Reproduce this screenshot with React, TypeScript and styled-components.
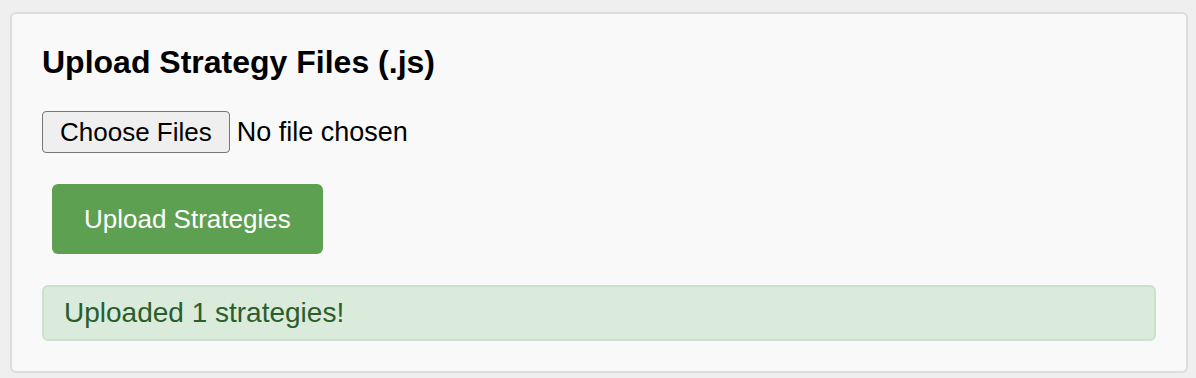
import React, { useState } from 'react';
import styled, { createGlobalStyle } from 'styled-components';

const GlobalStyle = createGlobalStyle`
  html, body {
    margin: 0;
    padding: 0;
    background: #efefef;
    font-family: "Liberation Sans", Arial, Helvetica, sans-serif;
  }
`;

const Page = styled.div`
  padding: 12px 8px 6px 10px;
`;

const Card = styled.section`
  background: #f9f9f9;
  border: 2px solid #dddddd;
  border-radius: 6px;
  padding: 30px;
`;

const Title = styled.h3`
  margin: 0 0 31px;
  font-size: 32px;
  line-height: 36px;
  font-weight: bold;
  color: #000;
`;

const FileRow = styled.div`
  display: flex;
  align-items: center;
  height: 42px;
`;

const HiddenInput = styled.input`
  display: none;
`;

const ChooseButton = styled.label`
  box-sizing: border-box;
  display: inline-flex;
  align-items: center;
  height: 42px;
  padding: 0 17px;
  background: #efefef;
  border: 1.5px solid #767676;
  border-radius: 4px;
  font-size: 26px;
  color: #000;
  cursor: default;
`;

const FileName = styled.span`
  margin-left: 7px;
  font-size: 27px;
  color: #000;
`;

const UploadButton = styled.button`
  display: block;
  margin: 31px 0 31px 10px;
  padding: 19px 32px;
  background: #5ea052;
  color: #fff;
  border: none;
  border-radius: 6px;
  font-family: inherit;
  font-size: 26px;
  line-height: 32px;
  cursor: pointer;
`;

const Alert = styled.div<{ $tone: 'success' | 'error' }>`
  padding: 11px 20px;
  border-radius: 6px;
  font-size: 28px;
  line-height: 30px;
  background: ${({ $tone }) => ($tone === 'success' ? '#daebdc' : '#f4dcdc')};
  border: 2px solid ${({ $tone }) => ($tone === 'success' ? '#c7e3cc' : '#ebc2c2')};
  color: ${({ $tone }) => ($tone === 'success' ? '#2a5e2c' : '#7a2222')};
`;

const App: React.FC = () => {
  const [files, setFiles] = useState<FileList | null>(null);

  const label = files && files.length
    ? (files.length === 1 ? files[0].name : `${files.length} files`)
    : 'No file chosen';

  return (
    <>
      <GlobalStyle />
      <Page>
        <Card>
          <Title>Upload Strategy Files (.js)</Title>
          <FileRow>
            <ChooseButton htmlFor="strategy-files">Choose Files</ChooseButton>
            <HiddenInput
              id="strategy-files"
              type="file"
              accept=".js"
              multiple
              onChange={(e) => setFiles(e.target.files)}
            />
            <FileName>{label}</FileName>
          </FileRow>
          <UploadButton type="button">Upload Strategies</UploadButton>
          <Alert $tone="success">Uploaded 1 strategies!</Alert>
        </Card>
      </Page>
    </>
  );
};

export default App;
